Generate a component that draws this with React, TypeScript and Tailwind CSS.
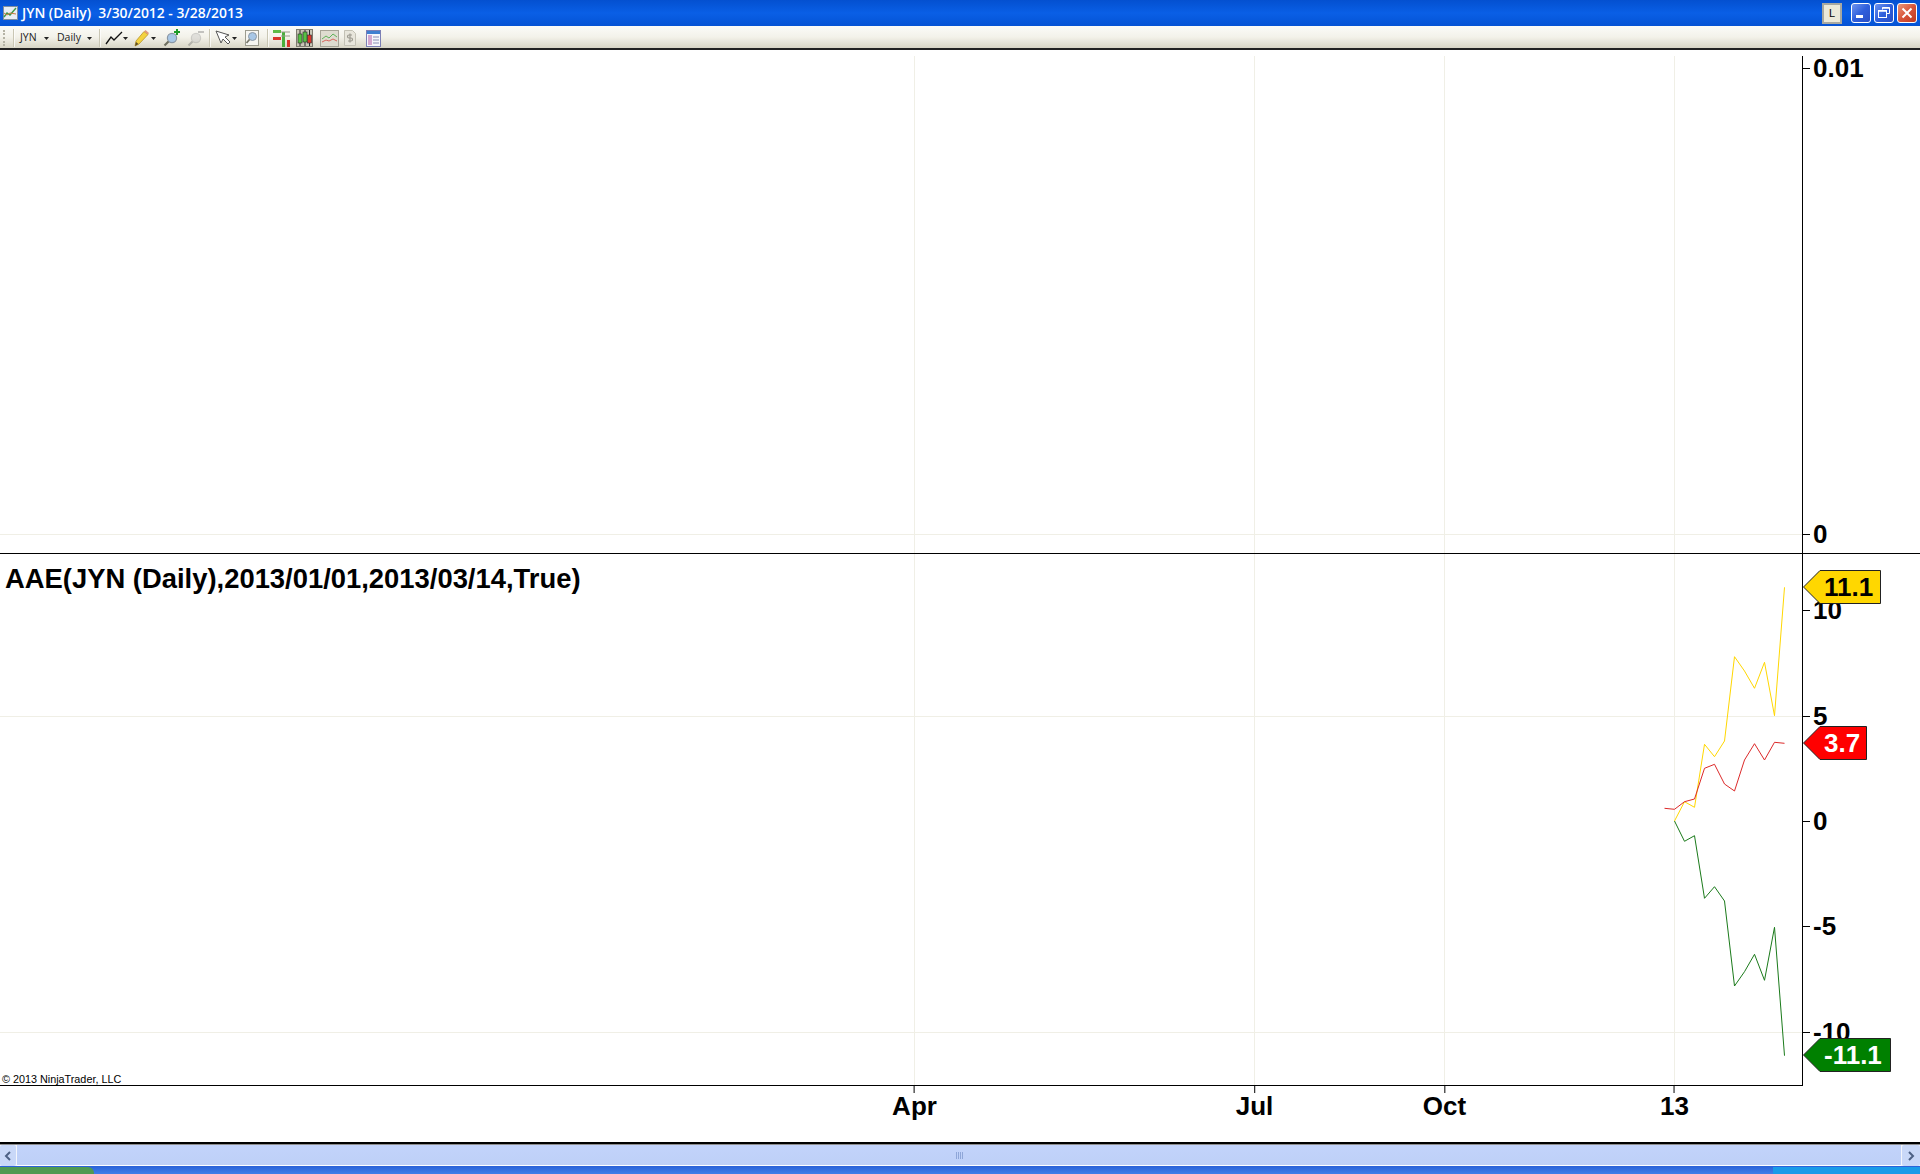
import React from 'react';

const GRID_X = [914, 1254, 1444, 1674];
const X_LABELS = [
    { x: 914, text: 'Apr' },
    { x: 1254, text: 'Jul' },
    { x: 1444, text: 'Oct' },
    { x: 1674, text: '13' },
];

// y values are page pixels, one point every 10px
const YELLOW = [821, 801.7, 807.3, 744.3, 756.7, 741, 656.7, 671, 688.3, 662.3, 715.7, 587.3];
const RED = [808.3, 809.3, 801.7, 799, 768.3, 764.3, 784, 791, 760, 743.7, 760, 742.3, 743.3];
const GREEN = [821, 841.3, 835.7, 898.3, 886.7, 901, 986, 971.7, 954.3, 980.3, 927.3, 1055.7];

const UPPER_TOP = 50;
const LOWER_TOP = 554;

const toPoints = (ys: number[], startX: number) =>
    ys.map((y, i) => `${startX + 0.5 + i * 10},${y}`).join(' ');

function Sep() {
    return <div className="h-[18px] w-[2px] border-l border-[#c9c6b4] bg-white/70" />;
}

function Caret({ className = '' }: { className?: string }) {
    return (
        <svg width="5" height="3" viewBox="0 0 5 3" className={className}>
            <path d="M0 0h5L2.5 3z" fill="#222" />
        </svg>
    );
}

function LineIcon() {
    return (
        <svg width="18" height="16" viewBox="0 0 18 16">
            <path d="M1 14 L6 7 L9 10 L17 2" fill="none" stroke="#111" strokeWidth="1.3" />
        </svg>
    );
}

function PencilIcon() {
    return (
        <svg width="15" height="17" viewBox="0 0 15 17">
            <path d="M1 16l1-5L10 1.5l4 3L5 14z" fill="#f4d23f" stroke="#b8962a" strokeWidth="0.8" />
            <path d="M10 1.5l4 3 1-1.5-3.500-3z" fill="#e39a7c" />
            <path d="M1 16l1-4 2.500 2z" fill="#5b4d28" />
        </svg>
    );
}

function ZoomIcon({ plus, dim }: { plus?: boolean; dim?: boolean }) {
    return (
        <svg width="18" height="18" viewBox="0 0 18 18" className={dim ? 'opacity-40 grayscale' : ''}>
            <circle cx="9" cy="9" r="4.6" fill="#a8c7e6" stroke="#8a97a5" strokeWidth="1.2" />
            <path d="M5.500 12.500L1.500 16.500" stroke="#6e6e5e" strokeWidth="2.200" />
            {plus && <path d="M14 0v6M11 3h6" stroke="#1f9a2a" strokeWidth="2" />}
            {dim && <path d="M11 3h6" stroke="#777" strokeWidth="2" />}
        </svg>
    );
}

function CursorIcon() {
    return (
        <svg width="16" height="16" viewBox="0 0 16 16">
            <path d="M1 1l5 12 2-4 5 5 2-2-5-5 4-2z" fill="#fff" stroke="#555" strokeWidth="1" />
        </svg>
    );
}

function PageZoomIcon() {
    return (
        <svg width="14" height="16" viewBox="0 0 14 16">
            <rect x="0.5" y="0.5" width="13" height="15" fill="#f6f6f2" stroke="#9c9c90" />
            <circle cx="7.5" cy="6.5" r="4" fill="#a8c7e6" stroke="#8a97a5" />
            <path d="M4.5 9.5L1.5 13" stroke="#77776a" strokeWidth="1.8" />
        </svg>
    );
}

function DataSeriesIcon() {
    return (
        <svg width="18" height="18" viewBox="0 0 18 18">
            <rect x="0" y="1" width="8" height="3" fill="#5dbb46" />
            <rect x="0" y="8" width="8" height="3" fill="#d8362b" />
            <rect x="9" y="3" width="3" height="15" fill="#49b03c" />
            <rect x="14" y="11" width="3" height="7" fill="#d8362b" />
            <path d="M8 3h9M8 7h9" stroke="#9a9a8c" strokeWidth="1" />
        </svg>
    );
}

function BarsIcon() {
    return (
        <svg width="17" height="18" viewBox="0 0 17 18">
            <rect x="0.5" y="0.5" width="16" height="17" fill="#c9c6b6" stroke="#7d7b6f" />
            <path d="M4 1v16M9 1v16M13.500 1v16" stroke="#2a2a2a" strokeWidth="1" />
            <rect x="2" y="5" width="4" height="9" fill="#57c043" stroke="#2a2a2a" strokeWidth="0.6" />
            <rect x="7" y="3" width="4" height="10" fill="#57c043" stroke="#2a2a2a" strokeWidth="0.6" />
            <rect x="11.500" y="6" width="4" height="8" fill="#d8362b" stroke="#2a2a2a" strokeWidth="0.6" />
        </svg>
    );
}

function IndicatorIcon() {
    return (
        <svg width="19" height="17" viewBox="0 0 19 17">
            <rect x="0.5" y="0.5" width="18" height="16" fill="#dedcd0" stroke="#a5a396" />
            <path d="M2 9l4-3 3 2 4-4 4 3" fill="none" stroke="#5fb35a" strokeWidth="1" />
            <path d="M2 12l4-2 3 1 4-2 4 2" fill="none" stroke="#d9675e" strokeWidth="1" />
        </svg>
    );
}

function DollarIcon() {
    return (
        <svg width="12" height="16" viewBox="0 0 12 16">
            <path d="M0.5 0.5h8l3 3v12h-11z" fill="#e8e6dc" stroke="#c3c1b5" />
            <path d="M8 5H5a1.5 1.5 0 0 0 0 3h2a1.5 1.5 0 0 1 0 3H4M6 3.5v9" fill="none" stroke="#9c9a90" strokeWidth="1.2" />
        </svg>
    );
}

function PropsIcon() {
    return (
        <svg width="15" height="17" viewBox="0 0 15 17">
            <rect x="0.5" y="0.5" width="14" height="16" fill="#f5f5fb" stroke="#7b7fb5" />
            <rect x="1" y="1" width="13" height="3" fill="#3f7fd0" />
            <rect x="2" y="5" width="4" height="10" fill="#d3a7cf" />
            <path d="M7 7h6M7 10h6M7 13h6" stroke="#8a8fb5" strokeWidth="1" />
        </svg>
    );
}

function AppIcon() {
    return (
        <svg width="15" height="14" viewBox="0 0 15 14">
            <rect x="0.5" y="0.5" width="14" height="13" fill="#e8eef5" stroke="#7f8fa0" />
            <path d="M1 11l3-4 3 2 6-7" fill="none" stroke="#3c9a4a" strokeWidth="1.4" />
            <path d="M1 7l3 2 3-2 6 1" fill="none" stroke="#c9793f" strokeWidth="1" />
        </svg>
    );
}

function WinButton({ kind }: { kind: 'min' | 'max' | 'close' }) {
    const bg =
        kind === 'close'
            ? 'bg-gradient-to-br from-[#e9967a] via-[#d8553a] to-[#c0391f]'
            : 'bg-gradient-to-br from-[#6f93ee] via-[#2f5fdc] to-[#2a4fc4]';
    return (
        <div className={`flex h-[20px] w-[20px] items-center justify-center rounded-[3px] border border-white ${bg}`}>
            <svg width="14" height="14" viewBox="0 0 14 14">
                {kind === 'min' && <rect x="2" y="9" width="7" height="3" fill="#fff" />}
                {kind === 'max' && (
                    <g fill="none" stroke="#fff">
                        <path d="M5.5 3.5V1.5h7v6h-2.5" strokeWidth="1" />
                        <rect x="1.5" y="4.5" width="8" height="7" strokeWidth="1" />
                        <path d="M1.5 5h8M5.5 2h7" strokeWidth="1.4" />
                    </g>
                )}
                {kind === 'close' && <path d="M2.5 2.5l9 9M11.5 2.5l-9 9" stroke="#fff" strokeWidth="2" />}
            </svg>
        </div>
    );
}

function TitleBar() {
    return (
        <div className="flex h-[26px] shrink-0 items-center bg-gradient-to-b from-[#0450d0] via-[#0a5fe6] to-[#0553d4] pl-[3px] pr-[3px]">
            <AppIcon />
            <span className="ml-[4px] whitespace-pre font-['Open_Sans',sans-serif] text-[13.9px] font-semibold text-white">
                JYN (Daily)  3/30/2012 - 3/28/2013
            </span>
            <div className="ml-auto flex items-center">
                <div className="mr-[9px] flex h-[21px] w-[20px] items-center justify-center border-2 border-[#a8a8a0] bg-[#ece9d8] font-['Liberation_Sans',sans-serif] text-[11px] text-black">
                    L
                </div>
                <div className="flex gap-[3px]">
                    <WinButton kind="min" />
                    <WinButton kind="max" />
                    <WinButton kind="close" />
                </div>
            </div>
        </div>
    );
}

function Toolbar() {
    return (
        <div className="flex h-[22px] shrink-0 items-center bg-gradient-to-b from-[#fbfbf8] via-[#f3f2ea] to-[#d8d5c5] pt-[2px] font-['Open_Sans',sans-serif] text-[10.5px] text-[#222]">
            <div className="ml-[3px] h-[16px] w-[3px] border-l-2 border-dotted border-[#b5b3a5]" />
            <div className="ml-[7px]"><Sep /></div>
            <span className="ml-[5px] w-[24px]">JYN</span>
            <Caret />
            <span className="ml-[8px] w-[30px]">Daily</span>
            <Caret />
            <div className="ml-[7px]"><Sep /></div>
            <div className="ml-[4px]"><LineIcon /></div>
            <Caret />
            <div className="ml-[6px]"><PencilIcon /></div>
            <Caret className="ml-[2px]" />
            <div className="ml-[7px]"><ZoomIcon plus /></div>
            <div className="ml-[6px]"><ZoomIcon dim /></div>
            <div className="ml-[4px]"><Sep /></div>
            <div className="ml-[4px]"><CursorIcon /></div>
            <Caret className="ml-[1px]" />
            <div className="ml-[8px]"><PageZoomIcon /></div>
            <div className="ml-[8px]"><Sep /></div>
            <div className="ml-[4px]"><DataSeriesIcon /></div>
            <div className="ml-[5px]"><BarsIcon /></div>
            <div className="ml-[7px]"><IndicatorIcon /></div>
            <div className="ml-[5px]"><DollarIcon /></div>
            <div className="ml-[10px]"><PropsIcon /></div>
        </div>
    );
}

function PriceTag({ y, right, fill, text, color }: { y: number; right: number; fill: string; text: string; color: string }) {
    const w = right - 1803;
    return (
        <div className="absolute left-0 h-[34px]" style={{ top: y - 17, width: w + 1 }}>
            <svg className="absolute inset-0" width={w + 1} height="34">
                <polygon points={`0.5,17 17,0.5 ${w + 0.5},0.5 ${w + 0.5},33.5 17,33.5`} fill={fill} stroke="#222" strokeWidth="1" />
            </svg>
            <span className={`absolute left-[21px] top-0 text-[26px] font-bold leading-[34px] ${color}`}>{text}</span>
        </div>
    );
}

function AxisTick({ y, text }: { y: number; text: string }) {
    return (
        <div className="absolute left-0 flex items-center" style={{ top: y - 15, height: 30 }}>
            <div className="h-px w-[7px] bg-black" />
            <span className="ml-[3px] text-[26px] font-bold leading-[30px] text-black">{text}</span>
        </div>
    );
}

function GridLines({ top, height, rows }: { top: number; height: number; rows: number[] }) {
    return (
        <svg className="absolute inset-0" width="1802" height={height} viewBox={`0 ${top} 1802 ${height}`}>
            {GRID_X.map((x) => (
                <line key={x} x1={x + 0.5} x2={x + 0.5} y1={top} y2={top + height} stroke="#f0efe6" />
            ))}
            {rows.map((y) => (
                <line key={y} x1="0" x2="1802" y1={y + 0.5} y2={y + 0.5} stroke="#f0efe6" />
            ))}
        </svg>
    );
}

function UpperPanel() {
    return (
        <div className="flex h-[504px] shrink-0 border-b border-black pt-[6px]">
            <div className="relative w-[1803px] shrink-0 border-r border-black">
                <GridLines top={56} height={497} rows={[534]} />
            </div>
            <div className="relative flex-1 overflow-visible" style={{ marginTop: -UPPER_TOP - 6 }}>
                <AxisTick y={68} text="0.01" />
                <AxisTick y={534} text="0" />
            </div>
        </div>
    );
}

function LowerPanel() {
    return (
        <div className="flex h-[532px] shrink-0">
            <div className="relative w-[1803px] shrink-0 border-b border-r border-black">
                <GridLines top={LOWER_TOP} height={531} rows={[716, 1032]} />
                <svg className="absolute inset-0" width="1802" height="531" viewBox={`0 ${LOWER_TOP} 1802 531`}>
                    <polyline points={toPoints(YELLOW, 1674)} fill="none" stroke="#ffd700" strokeWidth="1" />
                    <polyline points={toPoints(RED, 1664)} fill="none" stroke="#dc2a2a" strokeWidth="1" />
                    <polyline points={toPoints(GREEN, 1674)} fill="none" stroke="#1a7a1a" strokeWidth="1" />
                </svg>
                <div className="absolute left-[5px] top-[10px] text-[27.4px] font-bold leading-[30px] text-black">
                    AAE(JYN (Daily),2013/01/01,2013/03/14,True)
                </div>
                <div className="absolute bottom-0 left-[2px] text-[10.8px] leading-[12px] text-black">
                    © 2013 NinjaTrader, LLC
                </div>
            </div>
            <div className="relative flex-1" style={{ marginTop: -LOWER_TOP }}>
                <AxisTick y={610} text="10" />
                <AxisTick y={716} text="5" />
                <AxisTick y={821} text="0" />
                <AxisTick y={926} text="-5" />
                <AxisTick y={1032} text="-10" />
                <PriceTag y={587} right={1880} fill="#ffd700" text="11.1" color="text-black" />
                <PriceTag y={743} right={1866} fill="#ff0000" text="3.7" color="text-white" />
                <PriceTag y={1055} right={1890} fill="#008000" text="-11.1" color="text-white" />
            </div>
        </div>
    );
}

function TimeAxis() {
    return (
        <div className="relative h-[56px] shrink-0">
            {X_LABELS.map((l) => (
                <div key={l.text} className="absolute top-0 flex -translate-x-1/2 flex-col items-center" style={{ left: l.x + 0.5 }}>
                    <div className="h-[7px] w-px bg-black" />
                    <span className="-mt-[2px] text-[26px] font-bold leading-[30px] text-black">{l.text}</span>
                </div>
            ))}
        </div>
    );
}

function ScrollBar() {
    return (
        <div className="flex h-[22px] shrink-0 border-t border-[#8d8d8d] bg-[#f4f6fc]">
            <div className="flex w-[16px] shrink-0 items-center justify-center rounded-[2px] bg-[#c9d8f8]">
                <svg width="8" height="10" viewBox="0 0 8 10">
                    <path d="M6 1L2 5l4 4" fill="none" stroke="#4d6185" strokeWidth="2" />
                </svg>
            </div>
            <div className="ml-[1px] flex flex-1 items-center justify-center border-b border-white bg-gradient-to-b from-[#c2d3fb] to-[#bed0f7]">
                <div className="flex gap-px">
                    {[0, 1, 2, 3].map((i) => (
                        <div key={i} className="h-[7px] w-px bg-[#8ea6d8]" />
                    ))}
                </div>
            </div>
            <div className="ml-[1px] flex w-[18px] shrink-0 items-center justify-center rounded-[2px] bg-[#c9d8f8]">
                <svg width="8" height="10" viewBox="0 0 8 10">
                    <path d="M2 1l4 4-4 4" fill="none" stroke="#4d6185" strokeWidth="2" />
                </svg>
            </div>
        </div>
    );
}

function TaskBar() {
    return (
        <div className="flex flex-1 items-end justify-between bg-gradient-to-b from-[#2a62d8] to-[#3f7fe8]">
            <div className="h-[7px] w-[94px] rounded-tr-[6px] bg-[#4f9a52]" />
            <div className="h-[7px] w-[147px] bg-[#1a9be8]" />
        </div>
    );
}

export default function App() {
    return (
        <div className="flex h-[1174px] w-[1920px] flex-col overflow-hidden bg-white font-['Liberation_Sans',Arial,sans-serif]">
            <TitleBar />
            <Toolbar />
            <div className="h-[2px] shrink-0 bg-[#222]" />
            <UpperPanel />
            <LowerPanel />
            <TimeAxis />
            <div className="h-[2px] shrink-0 bg-black" />
            <ScrollBar />
            <TaskBar />
        </div>
    );
}
